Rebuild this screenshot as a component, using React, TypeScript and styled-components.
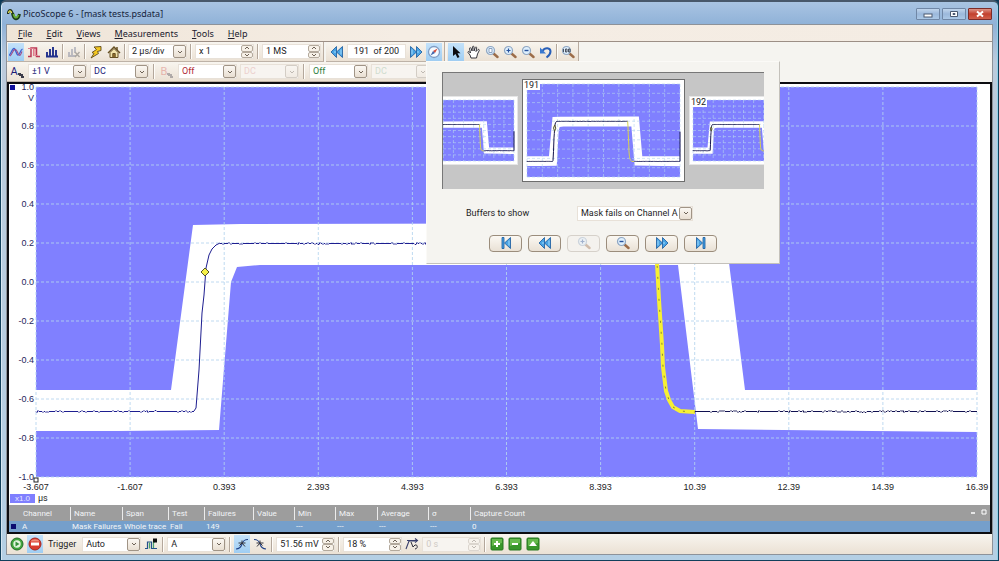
import React from "react";
import styled, { createGlobalStyle, css } from "styled-components";

const GlobalStyle = createGlobalStyle`
  *, *::before, *::after { box-sizing: border-box; }
  html, body { margin: 0; padding: 0; background: #0d3a58; }
  body, button, input, select { font-family: Roboto, "Noto Sans", sans-serif; font-size: 9px; }
  body { color: #1c1c24; }
  button { padding: 0; margin: 0; cursor: default; color: inherit; }
  svg { display: block; }
`;

/* ---------- window frame ---------- */

const Window = styled.div`
  display: flex;
  flex-direction: column;
  min-height: 100vh;
  padding: 0 5px 5px;
  border: 1px solid #12405c;
  border-top: 2px solid #48586a;
  border-radius: 6px 6px 0 0;
  background: linear-gradient(180deg, #a9c4e2 0, #90b2d8 22px, #bccbdc 60px, #b4cfe4 100%);
  box-shadow: inset 1px 0 0 #d7e6f2, inset -1px 0 0 #8fd0e8;
`;

const TitleBar = styled.header`
  display: flex;
  align-items: center;
  height: 22px;
  padding: 2px 1px 0 1px;
  gap: 2px;
`;

const Title = styled.h1`
  flex: 1;
  margin: 0;
  font-family: "Noto Sans", sans-serif;
  font-size: 9px;
  font-weight: 400;
  line-height: 12px;
  color: #16243c;
  white-space: nowrap;
`;

const WindowButtons = styled.div`
  display: flex;
  gap: 2px;
`;

const WindowButton = styled.button<{ $close?: boolean }>`
  display: grid;
  place-items: center;
  width: 24px;
  height: 12px;
  border: 1px solid ${(p) => (p.$close ? "#7d2b28" : "#7087a6")};
  border-radius: 1px;
  background: ${(p) =>
    p.$close
      ? "linear-gradient(#dd9488, #c2402e 50%, #d0604c)"
      : "linear-gradient(#c1d5ec, #9bb8db 50%, #abc8e6)"};
`;

const Client = styled.main`
  display: flex;
  flex: 1;
  flex-direction: column;
  border: 1px solid #8d9299;
  background: #f5f4f0;
`;

const MenuBar = styled.nav`
  display: flex;
  align-items: center;
  height: 17px;
  padding: 0 4px;
  border-bottom: 1px solid #9c8f86;
  background: linear-gradient(90deg, #efe5d8, #f5ede4 40%, #f4ece3);
`;

const MenuItem = styled.button`
  height: 15px;
  padding: 0 7px;
  border: 0;
  background: none;
  font-family: "Noto Sans", sans-serif;
  line-height: 15px;
  color: #20202c;
  &::first-letter { text-decoration: underline; }
`;

/* ---------- toolbars ---------- */

const ToolRow = styled.div`
  display: flex;
  height: 20px;
  gap: 2px;
`;

const toolSurface = css`
  display: flex;
  align-items: center;
  background: linear-gradient(#f8f5ef, #ebe1d4);
`;

const ToolGroup = styled.div<{ $gap?: number; $lead?: number }>`
  ${toolSurface}
  gap: ${(p) => p.$gap ?? 2}px;
  padding: 0 2px 0 ${(p) => p.$lead ?? 1}px;
  border-right: 1px solid #b9aca0;
  border-bottom: 1px solid #bdb2a7;
`;

const StatusBar = styled.footer`
  ${toolSurface}
  height: 20px;
  gap: 2px;
  padding: 0 2px;
`;

const Separator = styled.span<{ $wide?: boolean }>`
  flex: none;
  width: 2px;
  height: 15px;
  margin: 0 ${(p) => (p.$wide ? 1 : 0)}px;
  border-left: 1px solid #b3a79b;
  border-right: 1px solid #fffdf9;
`;

const Tool = styled.button<{ $active?: boolean; $faded?: boolean }>`
  display: grid;
  flex: none;
  place-items: center;
  width: 16px;
  height: 18px;
  border: 0;
  background: ${(p) => (p.$active ? "linear-gradient(#c4e2fa, #9fcdf2)" : "none")};
  opacity: ${(p) => (p.$faded ? 0.35 : 1)};
`;

const FieldBox = styled.span<{ $disabled?: boolean; $width?: number }>`
  display: grid;
  flex: none;
  align-items: center;
  width: ${(p) => p.$width ?? 59}px;
  height: 15px;
  background: ${(p) => (p.$disabled ? "#f7f4f0" : "#ffffff")};
  border: 1px solid #e8e1d8;
`;

const fieldText = css`
  grid-area: 1 / 1;
  width: 100%;
  min-width: 0;
  height: 13px;
  margin: 0;
  border: 0;
  padding: 0 12px 0 3px;
  background: transparent;
  line-height: 13px;
  outline-offset: -1px;
`;

const SelectControl = styled.select<{ $color?: string }>`
  ${fieldText}
  appearance: none;
  opacity: 1;
  color: ${(p) => p.$color ?? "#1c1c24"};
`;

const InputControl = styled.input<{ $color?: string; $center?: boolean }>`
  ${fieldText}
  color: ${(p) => p.$color ?? "#1c1c24"};
  ${(p) => p.$center && "padding: 0; text-align: center;"}
`;

const ArrowBox = styled.span<{ $faded?: boolean }>`
  grid-area: 1 / 1;
  justify-self: end;
  display: grid;
  place-items: center;
  width: 13px;
  height: 13px;
  border: 1px solid #a09486;
  border-radius: 2px;
  background: linear-gradient(#fbf8f3, #e9dfd2);
  opacity: ${(p) => (p.$faded ? 0.4 : 1)};
  pointer-events: none;
`;

const Stepper = styled.span<{ $faded?: boolean }>`
  grid-area: 1 / 1;
  justify-self: end;
  display: flex;
  flex-direction: column;
  width: 12px;
  height: 13px;
  opacity: ${(p) => (p.$faded ? 0.4 : 1)};
`;

const StepButton = styled.button`
  display: grid;
  flex: 1;
  place-items: center;
  min-height: 0;
  border: 1px solid #b3a99c;
  border-radius: 2px;
  background: #f7f1e8;
`;

const ToolLabel = styled.label`
  padding: 0 4px 0 3px;
  white-space: nowrap;
`;

/* ---------- scope view ---------- */

const Scope = styled.section`
  display: flex;
  flex: 1;
  flex-direction: column;
  border: 2px solid #0c0c10;
  background: #ffffff;
`;

const PlotGrid = styled.div`
  display: grid;
  flex: 1;
  grid-template-columns: 27px 1fr 13px;
  grid-template-rows: 3px minmax(200px, 1fr) 28px;
`;

const YAxis = styled.div`
  grid-area: 2 / 1;
  position: relative;
  display: flex;
  flex-direction: column;
  justify-content: space-between;
  align-items: flex-end;
  padding-right: 2px;
  font-family: "Liberation Sans", Arial, sans-serif;
  color: #26265c;
`;

const YTick = styled.span`
  display: flex;
  align-items: center;
  height: 0;
  white-space: nowrap;
`;

const YUnit = styled.span`
  position: absolute;
  top: 6px;
  right: 2px;
  line-height: 11px;
`;

const ChannelMarker = styled.span`
  position: absolute;
  top: -2px;
  left: 1px;
  width: 5px;
  height: 5px;
  background: #10109c;
`;

const PlotArea = styled.div`
  grid-area: 2 / 2;
  position: relative;
`;

const PlotSvg = styled.svg`
  position: absolute;
  inset: 0;
  width: 100%;
  height: 100%;
  overflow: visible;
`;

const XAxis = styled.div`
  grid-area: 3 / 2;
  display: flex;
  justify-content: space-between;
  font-family: "Liberation Sans", Arial, sans-serif;
  color: #1d1d24;
`;

const XTick = styled.span`
  display: flex;
  justify-content: center;
  width: 0;
  padding-top: 5px;
  line-height: 10px;
  white-space: nowrap;
`;

const XScale = styled.div`
  grid-area: 3 / 1;
  display: flex;
  align-items: center;
  align-self: end;
  gap: 3px;
  width: 40px;
  padding: 0 0 2px 1px;
  line-height: 9px;
`;

const ScaleButton = styled.button`
  flex: none;
  width: 25px;
  height: 9px;
  border: 0;
  background: #7f7fff;
  font-family: "Liberation Sans", Arial, sans-serif;
  font-size: 8px;
  line-height: 9px;
  color: #e4e4ff;
`;

/* ---------- measurement table ---------- */

const TableArea = styled.div`
  position: relative;
`;

const MeasureTable = styled.table`
  width: 100%;
  table-layout: fixed;
  border-collapse: collapse;
  font-size: 8px;
  line-height: 11px;
  color: #f2f4f6;
`;

const HeadCell = styled.th`
  height: 16px;
  padding: 0;
  background: #9d9d9d;
  font-weight: 400;
  text-align: left;
  white-space: nowrap;
`;

const HeadText = styled.span<{ $first?: boolean }>`
  display: block;
  height: 13px;
  line-height: 13px;
  padding-left: ${(p) => (p.$first ? 13 : 3)}px;
  border-left: 1px solid ${(p) => (p.$first ? "transparent" : "#ececec")};
`;

const BodyCell = styled.td`
  height: 11px;
  padding: 0 0 0 2px;
  background: #759fcb;
  white-space: nowrap;
`;

const ChannelCell = styled.span`
  display: flex;
  align-items: center;
  gap: 6px;
  &::before { content: ""; width: 5px; height: 5px; background: #0c0c70; }
`;

const TableControls = styled.div`
  position: absolute;
  top: 3px;
  right: 2px;
  display: flex;
  gap: 3px;
`;

const TinyButton = styled.button`
  width: 8px;
  height: 8px;
  border: 0;
  background: none;
`;

/* ---------- buffer navigator ---------- */

const Anchor = styled.div`
  position: relative;
`;

const Navigator = styled.div`
  position: absolute;
  z-index: 5;
  top: 100%;
  left: 0;
  width: 354px;
  padding: 10px 15px 11px 15px;
  border: 1px solid #fbfaf7;
  border-right-color: #c4c1bb;
  border-bottom-color: #c4c1bb;
  background: #f5f4f0;
`;

const FilmStrip = styled.div`
  display: flex;
  align-items: center;
  justify-content: center;
  gap: 4px;
  height: 117px;
  border-top: 1px solid #777;
  border-left: 1px solid #777;
  background: #c6c6c6;
  overflow: hidden;
`;

const ThumbCard = styled.div<{ $current?: boolean }>`
  position: relative;
  flex: none;
  width: ${(p) => (p.$current ? 163 : 109)}px;
  height: ${(p) => (p.$current ? 103 : 69)}px;
  padding: ${(p) => (p.$current ? 4 : 3)}px;
  border: 1px solid ${(p) => (p.$current ? "#6d6d6d" : "#e6e6e6")};
  background: #ffffff;
`;

const ThumbPlot = styled.div`
  position: relative;
  height: 100%;
`;

const ThumbNumber = styled.span`
  position: absolute;
  top: 0;
  left: 0;
  padding: 0 1px;
  background: #ffffff;
  line-height: 10px;
`;

const FilterRow = styled.div`
  display: flex;
  align-items: center;
  margin-top: 17px;
  padding-left: 24px;
`;

const FilterLabel = styled.label`
  width: 111px;
`;

const NavButtons = styled.div`
  display: flex;
  justify-content: center;
  gap: 6px;
  margin-top: 14px;
`;

const NavButton = styled.button`
  display: grid;
  place-items: center;
  width: 33px;
  height: 17px;
  border: 1px solid #9b8d7c;
  border-radius: 4px;
  background: linear-gradient(#fbf8f3, #e9e1d5);
  &:disabled { border-color: #d6d1ca; background: #f4f2ee; }
  &:disabled svg { opacity: 0.4; }
`;

/* ---------- icons ---------- */

const Icon = ({ w = 14, h = 14, children }: { w?: number; h?: number; children: React.ReactNode }) => (
  <svg width={w} height={h} viewBox={`0 0 ${w} ${h}`} fill="none" aria-hidden="true">
    {children}
  </svg>
);

const LogoIcon = () => (
  <Icon>
    <path d="M1 7C1.500 2 4.500 2 5.500 7" stroke="#20301c" strokeWidth="2.400" />
    <path d="M1.500 6C2 3 4 3 5 7" stroke="#f0e94c" strokeWidth="1.100" />
    <path d="M5.500 6C6.500 13 11 14 12.500 7" stroke="#1c3a1a" strokeWidth="3" />
    <path d="M6.500 7C7.500 11.500 10 12 11.500 8" stroke="#69ae32" strokeWidth="1.800" />
  </Icon>
);

const Chevron = ({ up }: { up?: boolean }) => (
  <Icon w={6} h={4}>
    <path d={up ? "M1 3L3 1L5 3" : "M1 1L3 3L5 1"} stroke="#6d6256" />
  </Icon>
);

const WaveIcon = () => (
  <Icon>
    <path d="M0 10.500C2 9 3 3.500 5 3.500S7 10 9 10S11 5 13.500 4" stroke="#3e62d0" strokeWidth="1.300" />
    <path d="M1 11C3 10 3.500 5 6 4.500S9 10.500 10.500 10.500S12 8 13 6.500" stroke="#a24c86" strokeWidth="1.100" />
  </Icon>
);

const PersistIcon = () => (
  <Icon>
    <path d="M1 11.500H4V3H9.500V11.500H13" stroke="#bb3855" strokeWidth="1.500" />
    <path d="M1 3.500H6.500V11M8 4V10.500H10.500" stroke="#e07c8c" strokeWidth="1.100" />
  </Icon>
);

const SpectrumIcon = () => (
  <Icon>
    <path d="M1 11.500H13M2 11V7M5 11V4M8 11V2M11 11V5" stroke="#20308c" strokeWidth="1.900" />
  </Icon>
);

const SpectrumSetupIcon = () => (
  <Icon>
    <path d="M1 11H9M2 10V7M5 10V4M8 8V2" stroke="#536084" strokeWidth="1.900" />
    <path d="M8 7L12.500 12M12.500 7L8 12" stroke="#333" strokeWidth="1.400" />
  </Icon>
);

const BoltIcon = () => (
  <Icon>
    <path d="M5 2L12 1.500L12 5.500L8.500 6.500L9.500 8.500L2 13L5 8.500L3 7.500L7.500 4.500Z" fill="#f4c81f" stroke="#5d4a1c" strokeWidth="0.900" />
  </Icon>
);

const HomeIcon = () => (
  <Icon>
    <path d="M10 2V5" stroke="#665023" strokeWidth="1.500" />
    <path d="M3 7.500L7 3.500L11 7.500V12.500H3Z" fill="#f2e4ac" stroke="#665023" />
    <path d="M1 8L7 2L13 8" stroke="#665023" strokeWidth="1.400" />
    <path d="M5.800 12V8.500H8.200V12" fill="#96702c" stroke="#665023" />
  </Icon>
);

const arrowFill = { fill: "#48a3e4", stroke: "#17589c", strokeWidth: 0.8, strokeLinejoin: "round" as const };

const RewindIcon = () => (
  <Icon>
    <path d="M6.500 1.500V12.500L1 7Z" {...arrowFill} />
    <path d="M12.500 1.500V12.500L6.500 7Z" {...arrowFill} />
    <path d="M9.500 1.500L12.500 1.500" stroke="#17589c" strokeWidth="0" />
    <path d="M11 4.500V9.500M5 6V8" stroke="#a5dbfa" />
  </Icon>
);

const ForwardIcon = () => (
  <Icon>
    <path d="M1.500 1.500L7.500 7L1.500 12.500Z" {...arrowFill} />
    <path d="M7.500 1.500L13 7L7.500 12.500Z" {...arrowFill} />
    <path d="M3 4.500V9.500M9 6V8" stroke="#a5dbfa" />
  </Icon>
);

const FirstIcon = () => (
  <Icon>
    <path d="M3 1.500H5V12.500H3Z" {...arrowFill} />
    <path d="M11.500 1.500V12.500L5.500 7Z" {...arrowFill} />
    <path d="M10 4.500V9.500" stroke="#a5dbfa" />
  </Icon>
);

const LastIcon = () => (
  <Icon>
    <path d="M2.500 1.500L8.500 7L2.500 12.500Z" {...arrowFill} />
    <path d="M9 1.500H11V12.500H9Z" {...arrowFill} />
    <path d="M4 4.500V9.500" stroke="#a5dbfa" />
  </Icon>
);

const CompassIcon = () => (
  <Icon>
    <circle cx="7" cy="7" r="5.500" fill="#f4faff" stroke="#7f9dc4" strokeWidth="1.300" />
    <path d="M10.500 3.500L8 8L6 6Z" fill="#d64a38" />
    <path d="M3.500 10.500L6 6L8 8Z" fill="#4166ac" />
  </Icon>
);

const PointerIcon = () => (
  <Icon>
    <path d="M4 1V11L6.500 9L8.500 13L10.500 12L8.500 8.300H11.500Z" fill="#0b0b10" />
  </Icon>
);

const HandIcon = () => (
  <Icon>
    <path
      d="M4 13L3 10L1 7.500C.5 6.500 2 6 3 7.500L3.500 8L2.500 3.500C2.500 2.500 4 2.500 4.200 3.500L5 6L5.500 1.800C5.700 1 7 1 7 2V6L8.300 2.500C8.700 1.700 10 2 9.700 3L9 6.500L11 4.500C12 4 12.700 5 12 6L10.500 9L9.500 13Z"
      fill="#fff"
      stroke="#22222a"
      strokeWidth="0.900"
    />
  </Icon>
);

const ZoomIcon = ({ kind }: { kind: "in" | "out" | "area" | "full" }) => (
  <Icon>
    <path d="M8.500 8.500L12.500 12" stroke="#9c6c48" strokeWidth="2.400" strokeLinecap="round" />
    <circle cx="5.500" cy="5.500" r="4" fill="#deeffd" stroke="#8fa6c2" strokeWidth="1.200" />
    {kind === "in" && <path d="M3.500 5.500H7.500M5.500 3.500V7.500" stroke="#26519c" strokeWidth="1.200" />}
    {kind === "out" && <path d="M3.500 5.500H7.500" stroke="#26519c" strokeWidth="1.400" />}
    {kind === "area" && <path d="M4 3.500H7V7.500H4Z" fill="#fff" stroke="#8aa0bf" />}
    {kind === "full" && (
      <path d="M2.500 4V7M4.500 4H6V7H4.500ZM7.500 4H9V7H7.500Z" stroke="#3d4350" strokeWidth="0.900" />
    )}
  </Icon>
);

const UndoIcon = () => (
  <Icon>
    <path d="M3.500 6C6 2 11.500 2.500 11.500 6.500C11.500 9 9.500 11 7.500 12.500" stroke="#285fb8" strokeWidth="2" />
    <path d="M1 2.500V8.500H7Z" fill="#3978d0" />
  </Icon>
);

const ChannelGlyph = styled.span<{ $color: string }>`
  display: flex;
  align-items: center;
  font-size: 11px;
  line-height: 12px;
  color: ${(p) => p.$color};
`;

const ProbeIcon = () => (
  <Icon w={6} h={12}>
    <path d="M0 7H3V8H5V10H6V12H3V10H1V9H0Z" fill="#3c3c4a" />
  </Icon>
);

const PlayIcon = () => (
  <Icon>
    <circle cx="7" cy="7" r="6" fill="#41a53c" stroke="#256b2a" />
    <circle cx="7" cy="7" r="3.700" fill="#e4f5df" />
    <path d="M5.500 4.500L9.500 7L5.500 9.500Z" fill="#36903a" />
  </Icon>
);

const StopIcon = () => (
  <Icon>
    <circle cx="7" cy="7" r="6" fill="#d93b30" stroke="#a7261f" />
    <path d="M2.500 4.500C4 1.500 10 1.500 11.500 4.500Z" fill="#f08c7c" />
    <rect x="3" y="5.500" width="8" height="3" fill="#fff" />
  </Icon>
);

const AdvTriggerIcon = () => (
  <Icon>
    <path d="M1 11.500H3.500V5H7.500V11.500H13" stroke="#25528c" strokeWidth="1.200" />
    <path d="M5.500 11.500V5.500M9.500 11V5H11" stroke="#49a36a" strokeWidth="1.200" />
    <rect x="9" y="1.500" width="4" height="4" fill="#111" />
  </Icon>
);

const EdgeIcon = ({ falling }: { falling?: boolean }) => (
  <Icon>
    <g transform={falling ? "matrix(-1 0 0 1 14 0)" : undefined}>
      <path d="M1 12C5 12 6 10 7 7S9 2.500 13 2.500" stroke="#1d3f86" strokeWidth="1.100" />
      <path d="M3.500 6H10.500M7 3.500L7 6L10 9.500M7 6L4.500 8.500" stroke="#34343c" strokeWidth="1" />
    </g>
  </Icon>
);

const DelayIcon = () => (
  <Icon>
    <path d="M1 12L4 4H10M2 3.500H12M10 1.500L12.500 3.500L10 5.500" stroke="#393f6c" strokeWidth="1.100" />
    <path d="M6 5L8 10L10 8C13 7 13 12 10 12" stroke="#2e2e3a" />
  </Icon>
);

const GreenIcon = ({ d, solid }: { d: string; solid?: boolean }) => (
  <Icon>
    <rect x="1" y="1" width="12" height="12" rx="1" fill="#38962b" stroke="#287923" />
    <path d="M2 2H12V6L2 9Z" fill="#65b94d" />
    <path d={d} stroke={solid ? "none" : "#fff"} fill={solid ? "#fff" : "none"} strokeWidth="2" />
  </Icon>
);

/* ---------- waveform ---------- */

const MASK =
  "M0 303H135L157 138L205 137L688 136L709 303H941V345L836 344L662 342L642 178H500L224 178L201 180L195 195L183 343L82 344H0Z";
const RISE =
  "M158 324L160 321L163 283L166 226L168 208L170 181L173 168L176 162L180 158L184 156";
const FALL = "M619 157L621 176L623 213L626 258L627 280L630 304L633 313L637 320L644 324L659 325";

/* A flat line with one-unit spikes scattered by a small linear congruential generator. */
const noise = (from: number, to: number, y: number) => {
  let seed = from + 17;
  let d = `M${from} ${y}`;
  for (let x = from; x < to; x += 1) {
    seed = (seed * 1103 + 12345) % 65536;
    const r = seed % 100;
    d += `L${x + 1} ${y + (r > 88 ? 1 : r < 8 ? -1 : 0)}`;
  }
  return d;
};

const TOP_TRACE = noise(184, 619, 156.5);
const LOW_TRACE = noise(659, 941, 324.5);
const LEFT_TRACE = noise(0, 158, 324.5);

const ticks = Array.from({ length: 11 }, (_, i) => i);

const Waveform = ({ small }: { small?: boolean }) => {
  const line = { vectorEffect: "non-scaling-stroke" as const, fill: "none" };
  const trace = { ...line, stroke: small ? "#15154c" : "#1e1e90", strokeWidth: 1 };
  return (
    <PlotSvg viewBox="0 0 941 390" preserveAspectRatio="none" role="img" aria-label="Channel A waveform with mask">
      <rect width="941" height="390" fill="#8080ff" />
      <path d={MASK} fill="#ffffff" />
      {ticks.map((i) => (
        <path
          key={i}
          d={`M0 ${i * 39}H941M${i * 94.1} 0V390`}
          {...line}
          stroke="#b4d3ee"
          strokeWidth="1"
          strokeDasharray="3 2"
          strokeOpacity={small ? 0.6 : 0.85}
        />
      ))}
      <path d={RISE} {...trace} />
      <path d={TOP_TRACE} {...trace} />
      <path d={LEFT_TRACE} {...trace} />
      <path d={LOW_TRACE} {...trace} stroke="#101050" />
      <path d={FALL} {...line} stroke={small ? "#d8d24e" : "#f6f034"} strokeWidth={small ? 1 : 4} />
      {small ? (
        <path d="M941 200V324" {...line} stroke="#101050" strokeWidth="1" />
      ) : (
        <>
          <path d={FALL} {...line} stroke="#8c8830" strokeWidth="1" strokeDasharray="2 9" />
          <rect x="-2" y="391" width="4" height="4" fill="#fff" stroke="#222" />
        </>
      )}
      <path
        d={small ? "M163 185L170 172L177 185L170 198Z" : "M165 185L169 181L173 185L169 189Z"}
        {...line}
        fill={small ? "#eee" : "#f5f048"}
        stroke="#55552a"
      />
    </PlotSvg>
  );
};

/* ---------- composed controls ---------- */

type FieldProps = {
  label: string;
  value: string;
  color?: string;
  disabled?: boolean;
  width?: number;
  id?: string;
};

const Dropdown = ({ label, value, color, disabled, width, id }: FieldProps) => (
  <FieldBox $disabled={disabled} $width={width}>
    <SelectControl id={id} aria-label={id ? undefined : label} disabled={disabled} $color={color} defaultValue={value}>
      <option>{value}</option>
    </SelectControl>
    <ArrowBox $faded={disabled}>
      <Chevron />
    </ArrowBox>
  </FieldBox>
);

const Spinner = ({ label, value, color, disabled, width }: FieldProps) => (
  <FieldBox $disabled={disabled} $width={width}>
    <InputControl aria-label={label} disabled={disabled} $color={color} defaultValue={value} />
    <Stepper $faded={disabled}>
      <StepButton aria-label={`Increase ${label}`} disabled={disabled}>
        <Chevron up />
      </StepButton>
      <StepButton aria-label={`Decrease ${label}`} disabled={disabled}>
        <Chevron />
      </StepButton>
    </Stepper>
  </FieldBox>
);

const Thumb = ({ n, current }: { n?: string; current?: boolean }) => (
  <ThumbCard $current={current}>
    <ThumbPlot>
      <Waveform small />
    </ThumbPlot>
    {n && <ThumbNumber>{n}</ThumbNumber>}
  </ThumbCard>
);

const BufferNavigator = () => (
  <Navigator role="dialog" aria-label="Buffer navigator">
    <FilmStrip>
      <Thumb />
      <Thumb n="191" current />
      <Thumb n="192" />
    </FilmStrip>
    <FilterRow>
      <FilterLabel htmlFor="buffers">Buffers to show</FilterLabel>
      <Dropdown id="buffers" label="Buffers to show" value="Mask fails on Channel A" width={116} />
    </FilterRow>
    <NavButtons>
      <NavButton aria-label="First buffer"><FirstIcon /></NavButton>
      <NavButton aria-label="Previous buffer"><RewindIcon /></NavButton>
      <NavButton aria-label="Zoom in" disabled><ZoomIcon kind="in" /></NavButton>
      <NavButton aria-label="Zoom out"><ZoomIcon kind="out" /></NavButton>
      <NavButton aria-label="Next buffer"><ForwardIcon /></NavButton>
      <NavButton aria-label="Last buffer"><LastIcon /></NavButton>
    </NavButtons>
  </Navigator>
);

const columns: { title: string; value: string; width?: number }[] = [
  { title: "Channel", value: "A", width: 61 },
  { title: "Name", value: "Mask Failures", width: 52 },
  { title: "Span", value: "Whole trace", width: 46 },
  { title: "Test", value: "Fail", width: 36 },
  { title: "Failures", value: "149", width: 49 },
  { title: "Value", value: "", width: 41 },
  { title: "Min", value: "---", width: 41 },
  { title: "Max", value: "---", width: 42 },
  { title: "Average", value: "---", width: 51 },
  { title: "σ", value: "---", width: 42 },
  { title: "Capture Count", value: "0" },
];

const Measurements = () => (
  <TableArea>
    <MeasureTable>
      <colgroup>
        {columns.map((c) => (
          <col key={c.title} width={c.width} />
        ))}
      </colgroup>
      <thead>
        <tr>
          {columns.map((c, i) => (
            <HeadCell key={c.title} scope="col">
              <HeadText $first={i === 0}>{c.title}</HeadText>
            </HeadCell>
          ))}
        </tr>
      </thead>
      <tbody>
        <tr>
          {columns.map((c, i) => (
            <BodyCell key={c.title}>{i === 0 ? <ChannelCell>{c.value}</ChannelCell> : c.value}</BodyCell>
          ))}
        </tr>
      </tbody>
    </MeasureTable>
    <TableControls>
      <TinyButton aria-label="Minimise table">
        <Icon w={8} h={8}><path d="M2 5H6" stroke="#fff" strokeWidth="1.500" /></Icon>
      </TinyButton>
      <TinyButton aria-label="Maximise table">
        <Icon w={8} h={8}><path d="M2 2H6V6H2Z" stroke="#fff" /></Icon>
      </TinyButton>
    </TableControls>
  </TableArea>
);

const yLabels = ["1.0", "0.8", "0.6", "0.4", "0.2", "0.0", "-0.2", "-0.4", "-0.6", "-0.8", "-1.0"];
const xLabels = ["-3.607", "-1.607", "0.393", "2.393", "4.393", "6.393", "8.393", "10.39", "12.39", "14.39", "16.39"];
const menus = ["File", "Edit", "Views", "Measurements", "Tools", "Help"];

export default function App() {
  return (
    <>
      <GlobalStyle />
      <Window>
        <TitleBar>
          <LogoIcon />
          <Title>PicoScope 6 - [mask tests.psdata]</Title>
          <WindowButtons>
            <WindowButton aria-label="Minimise">
              <Icon w={10} h={8}><rect x="1" y="4" width="8" height="3" fill="#fff" stroke="#4c5a70" /></Icon>
            </WindowButton>
            <WindowButton aria-label="Restore">
              <Icon w={10} h={8}><path d="M1.500 1.500H8.500V6.500H1.500ZM4 3.500H6V4.500H4Z" fill="#fff" stroke="#4c5a70" /></Icon>
            </WindowButton>
            <WindowButton aria-label="Close" $close>
              <Icon w={10} h={8}><path d="M2 1.500L8 6.500M8 1.500L2 6.500" stroke="#fff" strokeWidth="2" /></Icon>
            </WindowButton>
          </WindowButtons>
        </TitleBar>
        <Client>
          <MenuBar>
            {menus.map((m) => (
              <MenuItem key={m}>{m}</MenuItem>
            ))}
          </MenuBar>

          <ToolRow>
            <ToolGroup>
              <Tool $active aria-label="Scope mode"><WaveIcon /></Tool>
              <Tool aria-label="Persistence mode"><PersistIcon /></Tool>
              <Tool aria-label="Spectrum mode"><SpectrumIcon /></Tool>
              <Separator />
              <Tool $faded aria-label="Spectrum options"><SpectrumSetupIcon /></Tool>
              <Separator />
              <Tool aria-label="Auto setup"><BoltIcon /></Tool>
              <Tool aria-label="Home"><HomeIcon /></Tool>
              <Separator />
              <Dropdown label="Timebase" value="2 µs/div" />
              <Separator $wide />
              <Spinner label="Zoom factor" value="x 1" />
              <Separator $wide />
              <Spinner label="Samples" value="1 MS" />
            </ToolGroup>
            <ToolGroup $lead={3}>
              <Tool aria-label="Previous buffer"><RewindIcon /></Tool>
              <FieldBox $width={59}>
                <InputControl $center aria-label="Buffer number" defaultValue="191  of 200" />
              </FieldBox>
              <Tool aria-label="Next buffer"><ForwardIcon /></Tool>
              <Anchor>
                <Tool $active aria-label="Buffer navigator"><CompassIcon /></Tool>
                <BufferNavigator />
              </Anchor>
            </ToolGroup>
            <ToolGroup>
              <Tool $active aria-label="Select"><PointerIcon /></Tool>
              <Tool aria-label="Hand"><HandIcon /></Tool>
              <Tool aria-label="Zoom area"><ZoomIcon kind="area" /></Tool>
              <Tool aria-label="Zoom in"><ZoomIcon kind="in" /></Tool>
              <Tool aria-label="Zoom out"><ZoomIcon kind="out" /></Tool>
              <Tool aria-label="Undo zoom"><UndoIcon /></Tool>
              <Separator />
              <Tool aria-label="Zoom full"><ZoomIcon kind="full" /></Tool>
            </ToolGroup>
          </ToolRow>

          <ToolRow>
            <ToolGroup $gap={3} $lead={2}>
              <Tool aria-label="Channel A options">
                <ChannelGlyph $color="#1c1c78">A<ProbeIcon /></ChannelGlyph>
              </Tool>
              <Dropdown label="Channel A range" value="±1 V" color="#1c1c78" />
              <Dropdown label="Channel A coupling" value="DC" color="#1c1c78" />
              <Separator $wide />
              <Tool $faded aria-label="Channel B options">
                <ChannelGlyph $color="#d0504c">B<ProbeIcon /></ChannelGlyph>
              </Tool>
              <Dropdown label="Channel B range" value="Off" color="#b02a38" />
              <Dropdown label="Channel B coupling" value="DC" color="#ecd0ce" disabled />
              <Separator $wide />
              <Dropdown label="Channel C range" value="Off" color="#2c8040" />
              <Dropdown label="Channel C coupling" value="DC" color="#cfdccf" disabled />
            </ToolGroup>
          </ToolRow>

          <Scope>
            <PlotGrid>
              <YAxis>
                <ChannelMarker />
                <YUnit>V</YUnit>
                {yLabels.map((l) => (
                  <YTick key={l}>{l}</YTick>
                ))}
              </YAxis>
              <PlotArea>
                <Waveform />
              </PlotArea>
              <XAxis>
                {xLabels.map((l) => (
                  <XTick key={l}>{l}</XTick>
                ))}
              </XAxis>
              <XScale>
                <ScaleButton>x1.0</ScaleButton>
                µs
              </XScale>
            </PlotGrid>
            <Measurements />
          </Scope>

          <StatusBar>
            <Tool aria-label="Start capture"><PlayIcon /></Tool>
            <Tool $active aria-label="Stop capture"><StopIcon /></Tool>
            <ToolLabel htmlFor="trigger">Trigger</ToolLabel>
            <Dropdown id="trigger" label="Trigger" value="Auto" />
            <Tool aria-label="Advanced triggers"><AdvTriggerIcon /></Tool>
            <Separator $wide />
            <Dropdown label="Trigger source" value="A" />
            <Separator $wide />
            <Tool $active aria-label="Rising edge"><EdgeIcon /></Tool>
            <Tool aria-label="Falling edge"><EdgeIcon falling /></Tool>
            <Separator $wide />
            <Spinner label="Threshold" value="51.56 mV" />
            <Separator $wide />
            <Spinner label="Pre-trigger" value="18 %" />
            <Tool aria-label="Post-trigger delay"><DelayIcon /></Tool>
            <Spinner label="Delay" value="0 s" color="#cfcac4" disabled />
            <Separator $wide />
            <Tool aria-label="Add measurement"><GreenIcon d="M7 4V10M4 7H10" /></Tool>
            <Tool aria-label="Remove measurement"><GreenIcon d="M4 7H10" /></Tool>
            <Tool aria-label="Edit measurement"><GreenIcon solid d="M7 4L11 9H3Z" /></Tool>
          </StatusBar>
        </Client>
      </Window>
    </>
  );
}
